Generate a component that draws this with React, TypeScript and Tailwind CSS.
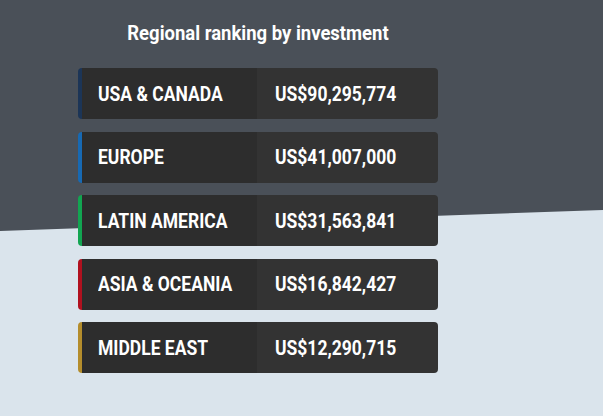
const regions = [
  { name: "USA & CANADA", amount: "US$90,295,774", bar: "border-[#1c3557]" },
  { name: "EUROPE", amount: "US$41,007,000", bar: "border-[#1769b3]" },
  { name: "LATIN AMERICA", amount: "US$31,563,841", bar: "border-[#12a551]" },
  { name: "ASIA & OCEANIA", amount: "US$16,842,427", bar: "border-[#b0111f]" },
  { name: "MIDDLE EAST", amount: "US$12,290,715", bar: "border-[#b48d2c]" },
];

export default function App() {
  return (
    <div className="relative h-[416px] w-[603px] overflow-hidden bg-[#dae4ec] font-['Roboto',sans-serif]">
      {/* slanted dark band behind the top half */}
      <div className="absolute inset-0 bg-[#4a5058] [clip-path:polygon(0_0,100%_0,100%_210px,0_231px)]" />

      <div className="relative ml-[78px] w-[360px] pt-[20px]">
        <h2 className="scale-x-[0.88] text-center text-[21px] font-bold leading-[26px] text-white">
          Regional ranking by investment
        </h2>
        <ul className="mt-[22px] flex flex-col gap-[12.5px]">
          {regions.map((r) => (
            <li
              key={r.name}
              className={`flex h-[51px] overflow-hidden rounded-[4px] border-l-4 ${r.bar} text-[20px] font-bold text-white`}
            >
              <div className="flex w-[175px] items-center bg-[#2d2d2d] pl-[16px]">
                <span className="origin-left scale-x-[0.875] whitespace-nowrap">{r.name}</span>
              </div>
              <div className="flex flex-1 items-center bg-[#333333] pl-[18px]">
                <span className="origin-left scale-x-[0.875] whitespace-nowrap">{r.amount}</span>
              </div>
            </li>
          ))}
        </ul>
      </div>
    </div>
  );
}
